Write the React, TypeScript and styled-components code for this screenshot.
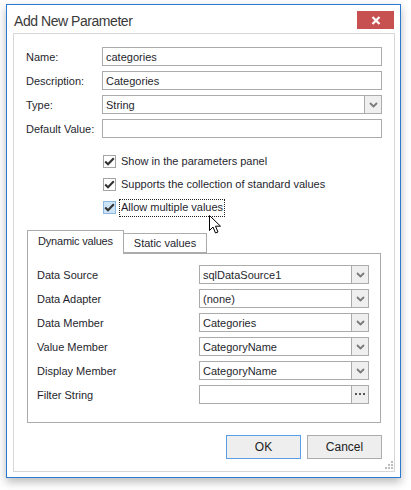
import React from "react";
import styled, { createGlobalStyle } from "styled-components";

const Global = createGlobalStyle`
  html, body { margin: 0; padding: 0; background: #ffffff; }
  body { font-family: "Liberation Sans", Arial, sans-serif; font-size: 11px; color: #1f1f2e; }
  * { box-sizing: border-box; }
`;

const Page = styled.div`
  width: 411px;
  height: 490px;
  padding: 4px 10px 0 6px;
  position: relative;
`;

const Window = styled.div`
  width: 395px;
  height: 474px;
  border: 1px solid #2b7ad2;
  background: #ffffff;
  box-shadow: 0 4px 9px rgba(0, 0, 0, 0.28);
  display: flex;
  flex-direction: column;
`;

const TitleBar = styled.div`
  height: 28px;
  display: flex;
  align-items: flex-start;
  justify-content: space-between;
  padding: 6px 6px 0 7px;
`;

const Title = styled.div`
  font-size: 14px;
  letter-spacing: -0.45px;
  color: #3a3a3a;
  line-height: 18px;
  margin-top: 1px;
`;

const CloseButton = styled.div`
  width: 37px;
  height: 18px;
  background: #c75050;
  display: flex;
  align-items: center;
  justify-content: center;
`;

const Body = styled.div`
  flex: 1;
  margin: 0 5px 5px 6px;
  border: 1px solid #d6d6d6;
  padding: 13px 12px 12px 12px;
  display: flex;
  flex-direction: column;
  position: relative;
`;

const FormGrid = styled.div`
  display: grid;
  grid-template-columns: 76px 1fr;
  row-gap: 5px;
`;

const Label = styled.div`
  display: flex;
  align-items: center;
  height: 19px;
  white-space: nowrap;
`;

const Field = styled.div`
  height: 19px;
  border: 1px solid #ababab;
  background: #fff;
  display: flex;
  align-items: stretch;
`;

const FieldText = styled.div`
  flex: 1;
  padding-left: 3px;
  display: flex;
  align-items: center;
  white-space: nowrap;
  color: #1f1f2e;
`;

const DropButton = styled.div`
  width: 17px;
  border-left: 1px solid #ababab;
  background: #efefef;
  display: flex;
  align-items: center;
  justify-content: center;
`;

const Checks = styled.div`
  margin: 17px 0 0 77px;
  display: flex;
  flex-direction: column;
  gap: 10px;
`;

const CheckRow = styled.div`
  display: flex;
  align-items: center;
  height: 13px;
  gap: 3px;
`;

const Box = styled.div<{ $hot?: boolean }>`
  width: 13px;
  height: 13px;
  border: 1px solid ${(p) => (p.$hot ? "#8db6e0" : "#a4a4a4")};
  background: ${(p) => (p.$hot ? "#cde4f7" : "#ffffff")};
  display: flex;
  align-items: center;
  justify-content: center;
`;

const CheckText = styled.div<{ $focus?: boolean }>`
  padding: 1px 1px 2px 1px;
  border: 1px dotted ${(p) => (p.$focus ? "#222" : "transparent")};
  white-space: nowrap;
  line-height: 13px;
`;

const Tabs = styled.div`
  margin: 16px 0 0 1px;
  display: flex;
  flex-direction: column;
  width: 354px;
`;

const TabHeader = styled.div`
  display: flex;
  align-items: flex-end;
  height: 23px;
`;

const Tab = styled.div<{ $active?: boolean }>`
  height: ${(p) => (p.$active ? 24 : 20)}px;
  padding: 0 ${(p) => (p.$active ? 10 : 10)}px;
  border: 1px solid #ababab;
  border-bottom: ${(p) => (p.$active ? "none" : "1px solid #ababab")};
  margin-left: ${(p) => (p.$active ? 0 : -1)}px;
  margin-bottom: ${(p) => (p.$active ? -1 : 0)}px;
  background: #fff;
  display: flex;
  align-items: center;
  padding-bottom: ${(p) => (p.$active ? 3 : 0)}px;
  position: relative;
  z-index: ${(p) => (p.$active ? 1 : 0)};
  white-space: nowrap;
  letter-spacing: ${(p) => (p.$active ? -0.2 : 0)}px;
`;

const TabPanel = styled.div`
  border: 1px solid #ababab;
  height: 170px;
  padding: 11px 10px 0 9px;
  display: grid;
  grid-template-columns: 162px 170px;
  row-gap: 5px;
  align-content: start;
`;

const Buttons = styled.div`
  margin-top: 12px;
  display: flex;
  justify-content: flex-end;
  gap: 6px;
`;

const Button = styled.div<{ $default?: boolean }>`
  width: 75px;
  height: 24px;
  border: 1px solid ${(p) => (p.$default ? "#5a9ee3" : "#acacac")};
  background: #eeeeee;
  display: flex;
  align-items: center;
  justify-content: center;
  font-size: 12px;
  color: #222;
`;

const Grip = styled.svg`
  position: absolute;
  right: 0;
  bottom: 1px;
`;

const Cursor = styled.svg`
  position: absolute;
  left: 209px;
  top: 215px;
`;

const Chevron = () => (
  <svg width="9" height="6" viewBox="0 0 9 6">
    <path d="M1 1 L4.5 4.5 L8 1" fill="none" stroke="#7a7a7a" strokeWidth="1.8" />
  </svg>
);

const Tick = () => (
  <svg width="11" height="9" viewBox="0 0 11 9">
    <path d="M1.2 4.6 L4 7.3 L9.8 1.3" fill="none" stroke="#333" strokeWidth="2.1" />
  </svg>
);

const Ellipsis = () => (
  <svg width="11" height="3" viewBox="0 0 11 3">
    <rect x="0" y="0" width="2" height="2" fill="#555" />
    <rect x="4" y="0" width="2" height="2" fill="#555" />
    <rect x="8" y="0" width="2" height="2" fill="#555" />
  </svg>
);

const Combo = ({ value }: { value: string }) => (
  <Field>
    <FieldText>{value}</FieldText>
    <DropButton>
      <Chevron />
    </DropButton>
  </Field>
);

const dataRows: [string, string][] = [
  ["Data Source", "sqlDataSource1"],
  ["Data Adapter", "(none)"],
  ["Data Member", "Categories"],
  ["Value Member", "CategoryName"],
  ["Display Member", "CategoryName"],
];

export default function App() {
  return (
    <>
      <Global />
      <Page>
        <Window>
          <TitleBar>
            <Title>Add New Parameter</Title>
            <CloseButton>
              <svg width="10" height="9" viewBox="0 0 10 9">
                <path d="M1.5 1 L8.5 8 M8.5 1 L1.5 8" stroke="#fff" strokeWidth="2.2" />
              </svg>
            </CloseButton>
          </TitleBar>
          <Body>
            <FormGrid>
              <Label>Name:</Label>
              <Field>
                <FieldText>categories</FieldText>
              </Field>
              <Label>Description:</Label>
              <Field>
                <FieldText>Categories</FieldText>
              </Field>
              <Label>Type:</Label>
              <Combo value="String" />
              <Label>Default Value:</Label>
              <Field />
            </FormGrid>
            <Checks>
              <CheckRow>
                <Box>
                  <Tick />
                </Box>
                <CheckText>Show in the parameters panel</CheckText>
              </CheckRow>
              <CheckRow>
                <Box>
                  <Tick />
                </Box>
                <CheckText>Supports the collection of standard values</CheckText>
              </CheckRow>
              <CheckRow>
                <Box $hot>
                  <Tick />
                </Box>
                <CheckText $focus>Allow multiple values</CheckText>
              </CheckRow>
            </Checks>
            <Tabs>
              <TabHeader>
                <Tab $active>Dynamic values</Tab>
                <Tab>Static values</Tab>
              </TabHeader>
              <TabPanel>
                {dataRows.map(([l, v]) => (
                  <React.Fragment key={l}>
                    <Label>{l}</Label>
                    <Combo value={v} />
                  </React.Fragment>
                ))}
                <Label>Filter String</Label>
                <Field>
                  <FieldText />
                  <DropButton>
                    <Ellipsis />
                  </DropButton>
                </Field>
              </TabPanel>
            </Tabs>
            <Buttons>
              <Button $default>OK</Button>
              <Button>Cancel</Button>
            </Buttons>
            <Grip width="10" height="10" viewBox="0 0 10 10">
              {[
                [7, 1],
                [7, 4],
                [4, 4],
                [7, 7],
                [4, 7],
                [1, 7],
              ].map(([x, y]) => (
                <rect key={`${x}-${y}`} x={x} y={y} width="2" height="2" fill="#bdbdbd" />
              ))}
            </Grip>
          </Body>
        </Window>
        <Cursor width="13" height="20" viewBox="0 0 13 20">
          <path
            d="M0.5 0.5 L0.5 15.5 L4 12 L6.5 18 L9 17 L6.5 11.2 L11.5 11.2 Z"
            fill="#fff"
            stroke="#000"
            strokeWidth="1"
            strokeLinejoin="miter"
          />
        </Cursor>
      </Page>
    </>
  );
}
